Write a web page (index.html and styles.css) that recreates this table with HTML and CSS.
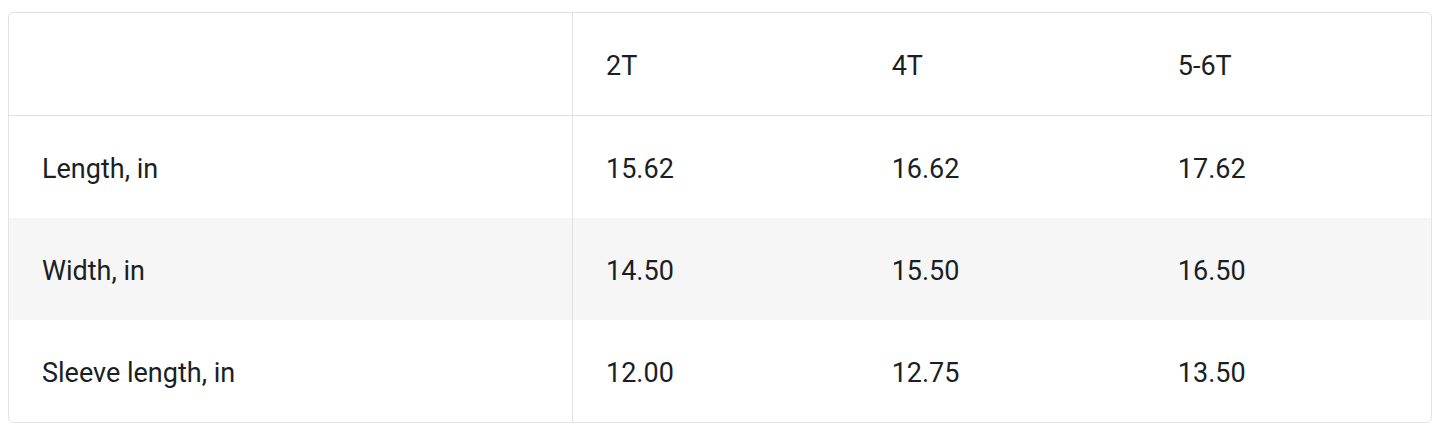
FILE: index.html
```html
<!DOCTYPE html>
<html>
<head>
<meta charset="utf-8">
<link rel="stylesheet" href="styles.css">
</head>
<body>
<div class="wrap">
<table class="sizes">
<thead>
<tr><th class="label"></th><th>2T</th><th>4T</th><th>5-6T</th></tr>
</thead>
<tbody>
<tr><td class="label">Length, in</td><td>15.62</td><td>16.62</td><td>17.62</td></tr>
<tr class="alt"><td class="label">Width, in</td><td>14.50</td><td>15.50</td><td>16.50</td></tr>
<tr><td class="label">Sleeve length, in</td><td>12.00</td><td>12.75</td><td>13.50</td></tr>
</tbody>
</table>
</div>
</body>
</html>
```
FILE: styles.css
```css
html, body {
  margin: 0;
  padding: 0;
  background: #fff;
}
body {
  padding: 12px 13px 0 8px;
  font-family: Roboto, "Liberation Sans", sans-serif;
  color: #1a1f24;
}
.wrap {
  border: 1px solid #e2e2e2;
  border-radius: 5px;
  overflow: hidden;
}
.sizes {
  width: 100%;
  border-collapse: collapse;
  table-layout: fixed;
  font-size: 27px;
}
.sizes th, .sizes td {
  text-align: left;
  font-weight: 400;
  padding: 4px 0 0 33px;
  height: 98px;
  vertical-align: middle;
}
.sizes th.label, .sizes td.label {
  width: 530px;
  border-right: 1px solid #e2e2e2;
}
.sizes thead th {
  border-bottom: 1px solid #e2e2e2;
}
.sizes tr.alt td {
  background: #f6f6f6;
}
```
